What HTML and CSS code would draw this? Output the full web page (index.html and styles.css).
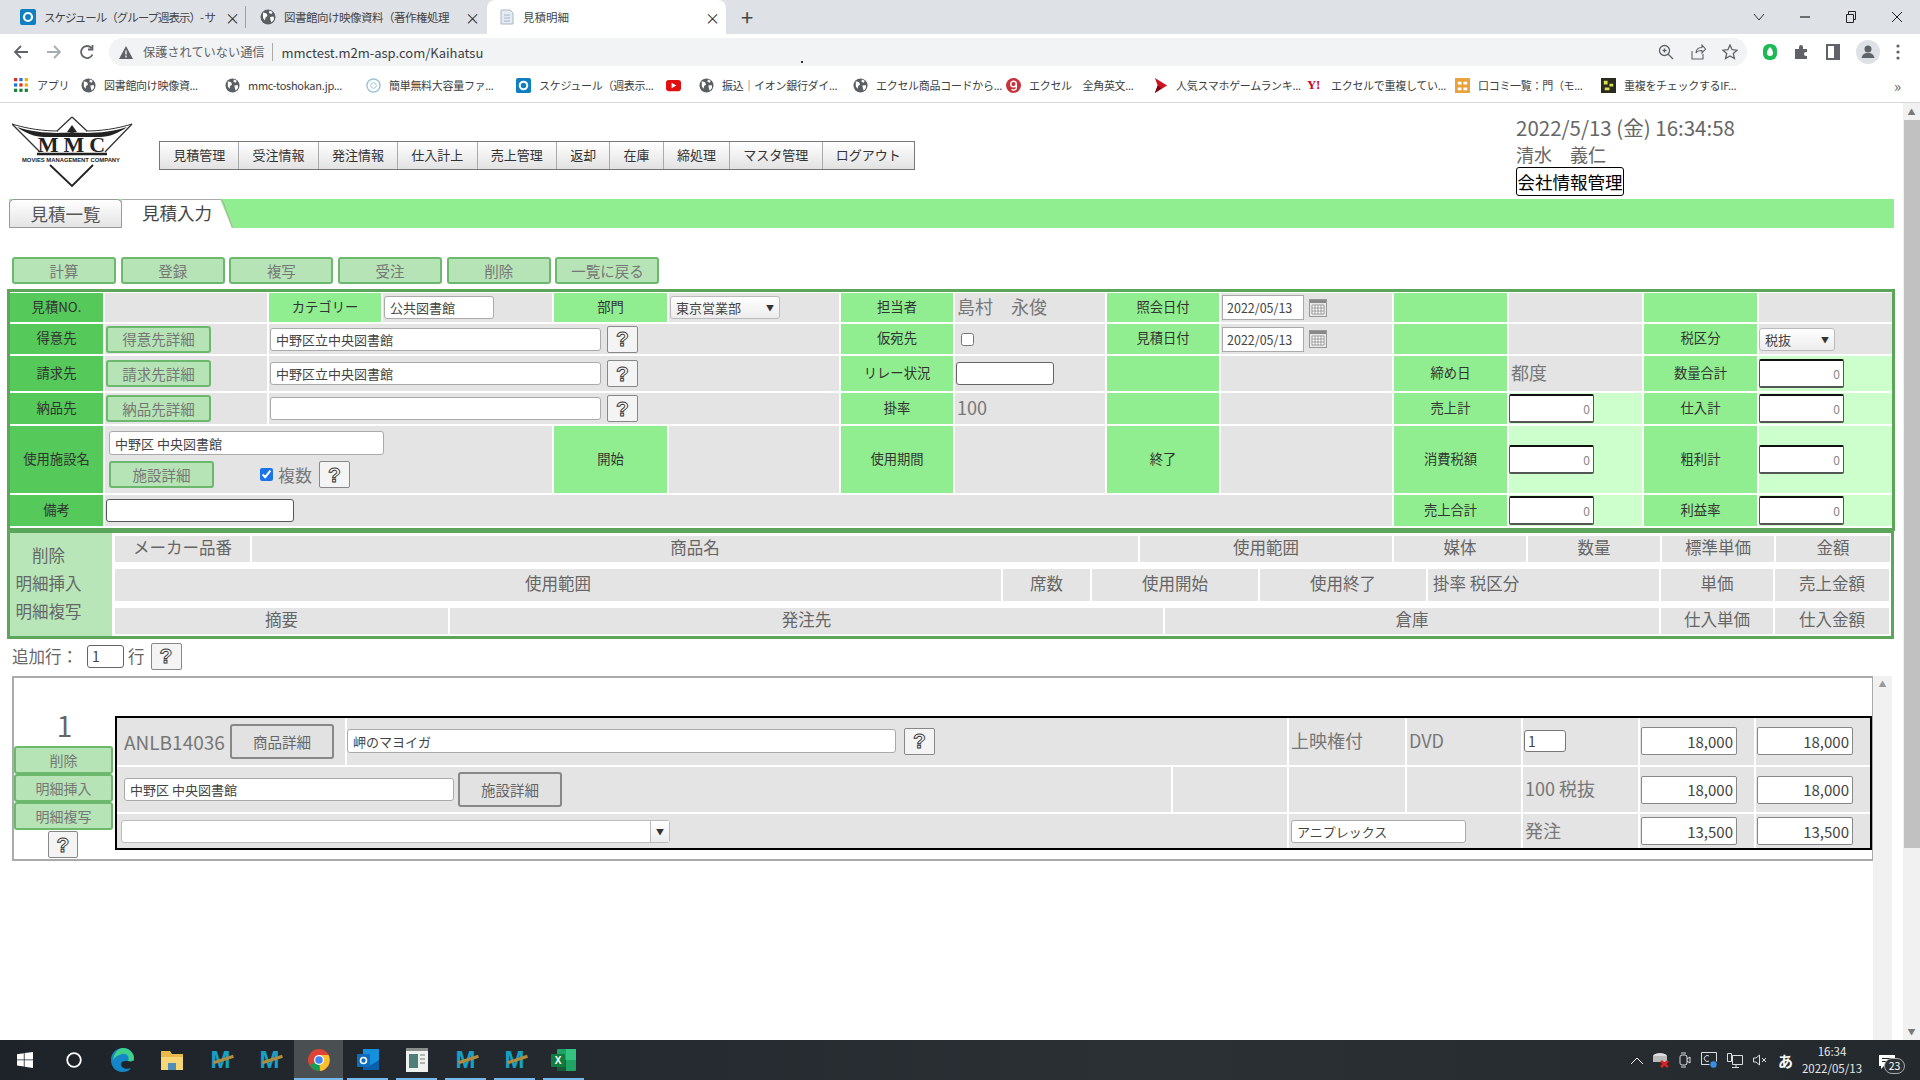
FILE: index.html
```html
<!DOCTYPE html>
<html lang="ja">
<head>
    <meta charset="UTF-8">
    <title>見積明細</title>
    <link rel="stylesheet" href="styles.css">
</head>
<body>
    <svg class="defs" width="0" height="0">
        <symbol id="globe" viewBox="0 0 16 16">
            <circle cx="8" cy="8" r="7.5" fill="#5a5f64"/>
            <path d="M3 3.5l3.5 1 1 2.5-2 1.5-.5 3-2-2.500zM9.500 1.500l3 1.500-1 2-2.500-1zM10 8l3.500-.5.5 3-2.500 3-1-2.500z" fill="#fff"/>
        </symbol>
        <symbol id="ring" viewBox="0 0 16 16">
            <rect width="16" height="16" rx="2" fill="#0f7fc0"/>
            <circle cx="8" cy="8" r="4" fill="none" stroke="#fff" stroke-width="2.200"/>
        </symbol>
        <symbol id="cal" viewBox="0 0 18 18">
            <rect x=".5" y=".5" width="17" height="17" fill="#e8e8e8" stroke="#999"/>
            <rect x="1" y="1" width="16" height="3" fill="#888"/>
            <path d="M3 6h12v9H3zM3 9h12M3 12h12M6 6v9M9 6v9M12 6v9" fill="#fff" stroke="#888" stroke-width=".8"/>
        </symbol>
    </svg>

    <header class="browser">
        <div class="tabstrip">
            <div class="tab tab-a">
                <svg class="ico16"><use href="#ring"/></svg>
                <span class="tab-title">スケジュール（グループ週表示）- サ</span>
                <span class="tab-x">×</span>
            </div>
            <div class="tab tab-b">
                <svg class="ico16"><use href="#globe"/></svg>
                <span class="tab-title">図書館向け映像資料（著作権処理</span>
                <span class="tab-x">×</span>
            </div>
            <div class="tab tab-active">
                <svg class="ico16" viewBox="0 0 16 16"><path d="M2 1h9l3 3v11H2z" fill="#e6ebf2" stroke="#a9b6c6"/><path d="M5 6h6M5 9h6M5 12h6" stroke="#9fb4cf"/></svg>
                <span class="tab-title">見積明細</span>
                <span class="tab-x">×</span>
            </div>
            <span class="tab-new">+</span>
            <div class="winctl">
                <svg width="12" height="12" viewBox="0 0 12 12"><path d="M1 3l5 6 5-6" fill="none" stroke="#333"/></svg>
                <svg width="12" height="12" viewBox="0 0 12 12"><path d="M1 6h10" stroke="#222" stroke-width="1.200"/></svg>
                <svg width="12" height="12" viewBox="0 0 12 12"><path d="M1.500 3.500h7v8h-7zM3.500 3.500v-3h7v8h-2" fill="none" stroke="#222"/></svg>
                <svg width="12" height="12" viewBox="0 0 12 12"><path d="M1 1l10 10M11 1L1 11" stroke="#222"/></svg>
            </div>
        </div>

        <div class="toolbar">
            <div class="nav-btns">
                <svg width="16" height="16" viewBox="0 0 16 16"><path d="M15 8H2M8 2L2 8l6 6" fill="none" stroke="#5f6368" stroke-width="1.800"/></svg>
                <svg width="16" height="16" viewBox="0 0 16 16"><path d="M1 8h13M8 2l6 6-6 6" fill="none" stroke="#a9adb1" stroke-width="1.800"/></svg>
                <svg width="16" height="16" viewBox="0 0 16 16"><path d="M13.500 10.500A6 6 0 1 1 12.500 4M13.500 1v4.500H9" fill="none" stroke="#5f6368" stroke-width="1.800"/></svg>
            </div>
            <div class="omnibox">
                <svg width="14" height="13" viewBox="0 0 14 13"><path d="M7 0l7 13H0z" fill="#5f6368"/><path d="M7 4.500v4M7 9.500v2" stroke="#fff" stroke-width="1.300"/></svg>
                <span class="omni-warn">保護されていない通信</span>
                <span class="omni-url">mmctest.m2m-asp.com/Kaihatsu</span>
                <i class="omni-dot"></i>
                <div class="omni-tools">
                    <svg width="16" height="16" viewBox="0 0 16 16"><circle cx="6.500" cy="6.500" r="5" fill="none" stroke="#5f6368" stroke-width="1.300"/><path d="M10 10l5 5M4.500 6.500h4M6.500 4.500v4" stroke="#5f6368" stroke-width="1.300"/></svg>
                    <svg width="16" height="16" viewBox="0 0 16 16"><path d="M2 7v8h11v-5M6 9c0-4 3-5.500 6-5.500V1l3.500 4-3.500 4V6.500C9 6.500 7 7 6 9z" fill="none" stroke="#5f6368" stroke-width="1.100"/></svg>
                    <svg width="16" height="16" viewBox="0 0 16 16"><path d="M8 1l2.100 4.700 5 .5-3.800 3.300 1.100 5L8 12l-4.400 2.500 1.100-5L.9 6.200l5-.5z" fill="none" stroke="#5f6368" stroke-width="1.300"/></svg>
                </div>
            </div>
            <div class="ext-btns">
                <svg width="16" height="18" viewBox="0 0 16 18"><rect x="1" y="1" width="14" height="16" rx="6" fill="#1db954"/><path d="M8 4c2 2 3 4 3 6a3 3 0 0 1-6 0c0-2 1-4 3-6z" fill="#fff"/></svg>
                <svg width="16" height="16" viewBox="0 0 16 16"><path d="M1 5h4V3a2 2 0 0 1 4 0v2h4v3h-1a2 2 0 0 0 0 4h1v3H1z" fill="#5f6368"/></svg>
                <svg width="14" height="16" viewBox="0 0 14 16"><rect x="1" y="1" width="12" height="14" fill="none" stroke="#5f6368" stroke-width="2"/><rect x="8" y="1" width="5" height="14" fill="#5f6368"/></svg>
                <svg width="24" height="24" viewBox="0 0 24 24"><circle cx="12" cy="12" r="12" fill="#dee1e6"/><circle cx="12" cy="9" r="3.500" fill="#5f6368"/><path d="M5.500 18c1-4 3-5 6.500-5s5.500 1 6.500 5z" fill="#5f6368"/></svg>
                <svg width="4" height="16" viewBox="0 0 4 16"><circle cx="2" cy="2" r="1.600" fill="#5f6368"/><circle cx="2" cy="8" r="1.600" fill="#5f6368"/><circle cx="2" cy="14" r="1.600" fill="#5f6368"/></svg>
            </div>
        </div>

        <div class="bookmarks">
            <div class="bm">
                <svg class="ico14" viewBox="0 0 14 14"><g fill="#d93025"><rect width="3" height="3"/><rect x="5" y="5" width="3" height="3"/></g><g fill="#1a73e8"><rect x="5" width="3" height="3"/><rect y="5" width="3" height="3"/></g><g fill="#f9ab00"><rect x="10" width="3" height="3"/><rect x="10" y="5" width="3" height="3"/></g><g fill="#188038"><rect y="10" width="3" height="3"/><rect x="5" y="10" width="3" height="3"/><rect x="10" y="10" width="3" height="3"/></g></svg>
                <span>アプリ</span>
            </div>
            <div class="bm"><svg class="ico14"><use href="#globe"/></svg><span>図書館向け映像資...</span></div>
            <div class="bm"><svg class="ico14"><use href="#globe"/></svg><span>mmc-toshokan.jp...</span></div>
            <div class="bm"><svg class="ico14" viewBox="0 0 16 16"><circle cx="8" cy="8" r="7" fill="none" stroke="#9cc3d5" stroke-width="1.500"/><circle cx="8" cy="8" r="3" fill="none" stroke="#9cc3d5"/></svg><span>簡単無料大容量ファ...</span></div>
            <div class="bm"><svg class="ico14"><use href="#ring"/></svg><span>スケジュール（週表示...</span></div>
            <div class="bm"><svg class="ico14" viewBox="0 0 16 16"><rect y="2" width="16" height="12" rx="3" fill="#e01010"/><path d="M6 5l5 3-5 3z" fill="#fff"/></svg></div>
            <div class="bm"><svg class="ico14"><use href="#globe"/></svg><span>振込｜イオン銀行ダイ...</span></div>
            <div class="bm"><svg class="ico14"><use href="#globe"/></svg><span>エクセル商品コードから...</span></div>
            <div class="bm"><svg class="ico14" viewBox="0 0 16 16"><circle cx="8" cy="8" r="8" fill="#c8323c"/><circle cx="8" cy="6.500" r="3" fill="none" stroke="#fff" stroke-width="1.500"/><path d="M11 7v4c0 2-4 2.500-5 1" fill="none" stroke="#fff" stroke-width="1.500"/></svg><span>エクセル　全角英文...</span></div>
            <div class="bm"><svg class="ico14" viewBox="0 0 16 16"><path d="M2 0l13 8-13 8 3-8z" fill="#d0101c"/><path d="M5 8l-3 8 7-5z" fill="#70080e"/></svg><span>人気スマホゲームランキ...</span></div>
            <div class="bm"><span class="bm-y">Y!</span><span>エクセルで重複してい...</span></div>
            <div class="bm"><svg class="ico14" viewBox="0 0 16 16"><rect width="16" height="16" fill="#e8a33c"/><path d="M3 4h4v3H3zM9 4h4v3H9zM3 10h4v3H3zM9 10h4v3H9z" fill="#fff"/></svg><span>口コミ一覧：門（モ...</span></div>
            <div class="bm"><svg class="ico14" viewBox="0 0 16 16"><rect width="16" height="16" fill="#2a2a1e"/><path d="M3 3h4v4H3zM9 6h4v3H9zM4 10h5v3H4z" fill="#d8e04c"/></svg><span>重複をチェックするIF...</span></div>
            <span class="bm-more">»</span>
        </div>
    </header>

    <div class="page">
        <main class="content">
            <div class="page-head">
                <svg class="logo" viewBox="0 0 124 74" width="124" height="74">
                    <path d="M60 2L45 16M60 2l15 14" fill="none" stroke="#333" stroke-width="1.300"/>
                    <path d="M60 10l-5 7h10z" fill="#222"/>
                    <path d="M0 9c16 5 32 7 46 7M120 9c-16 5-32 7-46 7" fill="none" stroke="#333" stroke-width="1"/>
                    <path d="M5 12c18 6 40 7 55 5 15 2 37 1 55-5-8 6-18 10-27 10H32C23 22 13 18 5 12z" fill="#222"/>
                    <path d="M0 9l28 28M120 9L93 37" fill="none" stroke="#333" stroke-width="1.300"/>
                    <path d="M38 50l22 21 21-21" fill="none" stroke="#222" stroke-width="1.800"/>
                    <text class="logo-mmc" x="62" y="37" text-anchor="middle">MMC</text>
                    <path d="M25 39h70" stroke="#222" stroke-width="2.500"/>
                    <text class="logo-sub" x="59" y="46.500" text-anchor="middle" textLength="98" lengthAdjust="spacingAndGlyphs">MOVIES MANAGEMENT COMPANY</text>
                </svg>
                <nav class="menu">
                    <a>見積管理</a><a>受注情報</a><a>発注情報</a><a>仕入計上</a><a>売上管理</a><a>返却</a><a>在庫</a><a>締処理</a><a>マスタ管理</a><a>ログアウト</a>
                </nav>
                <div class="head-info">
                    <div class="clock">2022/5/13 (金) 16:34:58</div>
                    <div class="user">清水　義仁</div>
                    <button class="company-btn">会社情報管理</button>
                </div>
            </div>

            <div class="tabbar">
                <div class="ptab">見積一覧</div>
                <div class="ptab-on">
                    <span>見積入力</span>
                    <svg width="18" height="29" viewBox="0 0 18 29"><path d="M0 0h4l12 29H0z" fill="#fff"/><path d="M0 .5h4c1.500 0 2.500 1 3 2L16.500 29" fill="none" stroke="#aaa"/></svg>
                </div>
            </div>

            <div class="actions">
                <button class="gbtn">計算</button>
                <button class="gbtn">登録</button>
                <button class="gbtn">複写</button>
                <button class="gbtn">受注</button>
                <button class="gbtn">削除</button>
                <button class="gbtn">一覧に戻る</button>
            </div>

            <table class="form">
                <colgroup>
                    <col class="c93"><col class="c164"><col class="c114"><col class="c171"><col class="c115"><col class="c172"><col class="c114"><col class="c152"><col class="c114"><col class="c173"><col class="c115"><col class="c135"><col class="c115"><col class="c135">
                </colgroup>
                <tr class="r1">
                    <th class="dk">見積NO.</th><td></td>
                    <th>カテゴリー</th><td><input class="in in-cat" value="公共図書館"></td>
                    <th>部門</th><td><div class="sel sel-dept">東京営業部<i>▼</i></div></td>
                    <th>担当者</th><td class="val">島村　永俊</td>
                    <th>照会日付</th><td><div class="datewrap"><input class="in in-date" value="2022/05/13"><svg width="18" height="18"><use href="#cal"/></svg></div></td>
                    <th></th><td></td><th></th><td></td>
                </tr>
                <tr class="r2">
                    <th class="dk">得意先</th><td><button class="gbtn gbtn-s">得意先詳細</button></td>
                    <td colspan="4"><div class="inrow"><input class="in in-long" value="中野区立中央図書館"><button class="help">?</button></div></td>
                    <th>仮宛先</th><td><input class="chk" type="checkbox"></td>
                    <th>見積日付</th><td><div class="datewrap"><input class="in in-date" value="2022/05/13"><svg width="18" height="18"><use href="#cal"/></svg></div></td>
                    <th></th><td></td>
                    <th>税区分</th><td><div class="sel sel-tax">税抜<i>▼</i></div></td>
                </tr>
                <tr class="r3">
                    <th class="dk">請求先</th><td><button class="gbtn gbtn-s">請求先詳細</button></td>
                    <td colspan="4"><div class="inrow"><input class="in in-long" value="中野区立中央図書館"><button class="help">?</button></div></td>
                    <th>リレー状況</th><td><input class="in in-relay"></td>
                    <th></th><td></td>
                    <th>締め日</th><td class="val">都度</td>
                    <th>数量合計</th><td class="lt"><input class="tot" value="0"></td>
                </tr>
                <tr class="r4">
                    <th class="dk">納品先</th><td><button class="gbtn gbtn-s">納品先詳細</button></td>
                    <td colspan="4"><div class="inrow"><input class="in in-long"><button class="help">?</button></div></td>
                    <th>掛率</th><td class="val">100</td>
                    <th></th><td></td>
                    <th>売上計</th><td class="lt"><input class="tot" value="0"></td>
                    <th>仕入計</th><td class="lt"><input class="tot" value="0"></td>
                </tr>
                <tr class="r5">
                    <th class="dk">使用施設名</th>
                    <td colspan="3">
                        <input class="in in-facility" value="中野区 中央図書館">
                        <div class="facility-row">
                            <button class="gbtn gbtn-s">施設詳細</button>
                            <input class="chk chk-on" type="checkbox" checked>
                            <span class="chk-label">複数</span>
                            <button class="help">?</button>
                        </div>
                    </td>
                    <th>開始</th><td></td>
                    <th>使用期間</th><td></td>
                    <th>終了</th><td></td>
                    <th>消費税額</th><td class="lt"><input class="tot" value="0"></td>
                    <th>粗利計</th><td class="lt"><input class="tot" value="0"></td>
                </tr>
                <tr class="r6">
                    <th class="dk">備考</th>
                    <td colspan="9"><input class="in in-note"></td>
                    <th>売上合計</th><td class="lt"><input class="tot" value="0"></td>
                    <th>利益率</th><td class="lt"><input class="tot" value="0"></td>
                </tr>
            </table>

            <div class="dhead">
                <div class="dhead-ops">
                    <div>削除</div>
                    <div>明細挿入</div>
                    <div>明細複写</div>
                </div>
                <div class="dhead-rows">
                    <div class="drow drow-a">
                        <div>メーカー品番</div><div>商品名</div><div>使用範囲</div><div>媒体</div><div>数量</div><div>標準単価</div><div>金額</div>
                    </div>
                    <div class="drow drow-b">
                        <div>使用範囲</div><div>席数</div><div>使用開始</div><div>使用終了</div><div class="drow-left">掛率 税区分</div><div>単価</div><div>売上金額</div>
                    </div>
                    <div class="drow drow-c">
                        <div>摘要</div><div>発注先</div><div>倉庫</div><div>仕入単価</div><div>仕入金額</div>
                    </div>
                </div>
            </div>

            <div class="addrow">
                <span>追加行：</span>
                <input class="in in-add" value="1">
                <span>行</span>
                <button class="help">?</button>
            </div>

            <div class="scrollarea">
                <div class="panel">
                    <div class="panel-side">
                        <div class="line-no">1</div>
                        <button class="gbtn gbtn-line">削除</button>
                        <button class="gbtn gbtn-line">明細挿入</button>
                        <button class="gbtn gbtn-line">明細複写</button>
                        <button class="help">?</button>
                    </div>
                    <table class="lines">
                        <colgroup>
                            <col class="l228"><col class="l826"><col class="l116"><col class="l118"><col class="l116"><col class="l117"><col class="l116"><col class="l116">
                        </colgroup>
                        <tr class="l1">
                            <td><div class="inrow"><span class="val code">ANLB14036</span><button class="gray-btn">商品詳細</button></div></td>
                            <td colspan="2" class="name-cell"><div class="inrow"><input class="in in-name" value="岬のマヨイガ"><button class="help">?</button></div></td>
                            <td class="val">上映権付</td>
                            <td class="val">DVD</td>
                            <td><input class="in in-qty" value="1"></td>
                            <td><input class="amt" value="18,000"></td>
                            <td><input class="amt" value="18,000"></td>
                        </tr>
                        <tr class="l2">
                            <td colspan="2"><div class="inrow"><input class="in in-site" value="中野区 中央図書館"><button class="gray-btn">施設詳細</button></div></td>
                            <td></td><td></td><td></td>
                            <td class="val">100 税抜</td>
                            <td><input class="amt" value="18,000"></td>
                            <td><input class="amt" value="18,000"></td>
                        </tr>
                        <tr class="l3">
                            <td colspan="3"><div class="combo"><span></span><i>▼</i></div></td>
                            <td colspan="2"><input class="in in-vendor" value="アニプレックス"></td>
                            <td class="val">発注</td>
                            <td><input class="amt" value="13,500"></td>
                            <td><input class="amt" value="13,500"></td>
                        </tr>
                    </table>
                </div>
                <div class="mini-scroll"><i>▲</i></div>
            </div>
        </main>
        <aside class="vscroll">
            <i class="vs-up">▲</i>
            <div class="vs-thumb"></div>
            <i class="vs-down">▼</i>
        </aside>
    </div>

    <footer class="taskbar">
        <div class="tb-app">
            <svg width="16" height="16" viewBox="0 0 16 16"><path d="M0 2.300l6.800-1v6.200H0zM7.600 1.100L16 0v7.500H7.600zM0 8.300h6.800v6.300l-6.800-1zM7.600 8.300H16V16l-8.400-1.200z" fill="#fff"/></svg>
        </div>
        <div class="tb-app">
            <svg width="16" height="16" viewBox="0 0 16 16"><circle cx="8" cy="8" r="6.800" fill="none" stroke="#fff" stroke-width="1.800"/></svg>
        </div>
        <div class="tb-app">
            <svg width="24" height="24" viewBox="0 0 24 24"><path d="M12 0C5 0 0 5 0 12c0 7 5 12 11 12 4 0 7-1 9-4-5 2-10 0-10-4 0-2 2-3 5-3h8c1-6-3-13-11-13z" fill="#1487c8"/><path d="M12 0c6 0 11 5 11 10 0 3-3 4-6 3 2-4-1-8-6-7-4 1-7 3-9 6C3 5 7 0 12 0z" fill="#3fd08a"/></svg>
        </div>
        <div class="tb-app">
            <svg width="22" height="20" viewBox="0 0 22 20"><path d="M0 1h9l2 3h11v16H0z" fill="#e9b949"/><path d="M0 7h22v13H0z" fill="#f6d675"/><rect x="7" y="13" width="8" height="7" fill="#4f8fb8"/></svg>
        </div>
        <div class="tb-app"><span class="tb-m">M</span></div>
        <div class="tb-app"><span class="tb-m">M</span></div>
        <div class="tb-app tb-active tb-run">
            <svg width="22" height="22" viewBox="0 0 22 22"><circle cx="11" cy="11" r="11" fill="#db4437"/><path d="M11 11L2 16a11 11 0 0 0 10 6z" fill="#0f9d58"/><path d="M11 6h9.500a11 11 0 0 1-8.500 16z" fill="#fbc02d"/><circle cx="11" cy="11" r="5" fill="#fff"/><circle cx="11" cy="11" r="3.800" fill="#4285f4"/></svg>
        </div>
        <div class="tb-app tb-run">
            <svg width="24" height="24" viewBox="0 0 24 24"><rect x="7" y="1" width="16" height="21" fill="#1490df"/><path d="M7 12l8 5 8-5v10H7z" fill="#0a5fa8"/><rect x="1" y="6" width="13" height="13" rx="1" fill="#0f6cbd"/><circle cx="7.500" cy="12.500" r="3" fill="none" stroke="#fff" stroke-width="1.600"/></svg>
        </div>
        <div class="tb-app tb-run">
            <svg width="22" height="24" viewBox="0 0 22 24"><rect width="22" height="24" fill="#eef1ee"/><rect y="0" width="22" height="3" fill="#8a8f8c"/><rect x="3" y="6" width="9" height="14" fill="#4f7f78"/><path d="M14 7h5M14 11h5M14 15h5" stroke="#777"/></svg>
        </div>
        <div class="tb-app tb-run"><span class="tb-m">M</span></div>
        <div class="tb-app tb-run"><span class="tb-m">M</span></div>
        <div class="tb-app tb-run">
            <svg width="25" height="24" viewBox="0 0 25 24"><rect x="6" y="1" width="19" height="22" rx="1" fill="#21a366"/><rect x="15" y="1" width="10" height="11" fill="#33c481"/><rect x="6" y="12" width="9" height="11" fill="#185c37"/><rect y="6" width="14" height="13" rx="1" fill="#107c41"/><text class="tb-x" x="7" y="16" text-anchor="middle">X</text></svg>
        </div>
        <div class="tray">
            <svg width="12" height="7" viewBox="0 0 12 7"><path d="M0 7l6-6 6 6" fill="none" stroke="#fff"/></svg>
            <svg width="16" height="16" viewBox="0 0 16 16"><ellipse cx="7" cy="4" rx="7" ry="3" fill="#ddd"/><rect y="4" width="14" height="6" fill="#bbb"/><path d="M8 9l7 6M15 9l-7 6" stroke="#e02020" stroke-width="2.500"/></svg>
            <svg width="12" height="16" viewBox="0 0 12 16"><rect x="1" y="3" width="7" height="10" rx="2" fill="none" stroke="#ddd"/><path d="M8 7l3-2v6l-3-2M2 1h5M2 15h5" fill="none" stroke="#ddd"/></svg>
            <svg width="16" height="16" viewBox="0 0 16 16"><path d="M.5.500h15v9M.5.500v12h8" fill="none" stroke="#ddd"/><path d="M8 4a3 3 0 1 0 0 5" fill="none" stroke="#ddd"/><circle cx="12.500" cy="12.500" r="3.200" fill="#3a8ee6"/></svg>
            <svg width="16" height="15" viewBox="0 0 16 15"><path d="M5.500 2.500h10v9h-10zM.5.500h4v8h-4zM5 14.500h7M9 11.500v3" fill="none" stroke="#ddd"/></svg>
            <svg width="14" height="12" viewBox="0 0 14 12"><path d="M.5 4v4h2.500L6.500 11V1L3 4zM9 4l4 4M13 4l-4 4" fill="none" stroke="#ddd"/></svg>
            <span class="tray-ime">あ</span>
            <div class="tray-clock"><div>16:34</div><div>2022/05/13</div></div>
            <div class="tray-note">
                <svg width="16" height="14" viewBox="0 0 16 14"><path d="M0 0h16v11H5l-3 3v-3H0z" fill="#fff"/><path d="M3 3.500h10M3 6.500h10" stroke="#222"/></svg>
                <span class="tray-badge">23</span>
            </div>
        </div>
    </footer>
</body>
</html>
```

FILE: styles.css
```css
* {
    box-sizing: border-box;
}
html, body {
    margin: 0;
    height: 1080px;
    overflow: hidden;
}
body {
    display: flex;
    flex-direction: column;
    width: 1920px;
    background: #fff;
    font-family: "Noto Sans CJK JP", "Noto Sans", sans-serif;
    color: #666;
}
button, input {
    font-family: inherit;
    margin: 0;
}
.defs {
    display: block;
    height: 0;
}
.ico16 {
    width: 16px;
    height: 16px;
    flex: none;
}
.ico14 {
    width: 15px;
    height: 15px;
    flex: none;
}

/* browser frame */
.browser {
    height: 103px;
    flex: none;
    border-bottom: 1px solid #d8d8d8;
}
.tabstrip {
    display: flex;
    height: 34px;
    background: #dee1e6;
    font-size: 11.500px;
    color: #444;
}
.tab {
    display: flex;
    align-items: center;
    gap: 8px;
}
.tab-a {
    width: 246px;
    padding: 0 10px 0 20px;
    border-right: 1px solid #9aa0a6;
    height: 22px;
    margin-top: 6px;
    letter-spacing: -1px;
}
.tab-b {
    width: 241px;
    padding: 0 12px 0 14px;
    height: 22px;
    margin-top: 6px;
    letter-spacing: -.5px;
}
.tab-active {
    width: 239px;
    padding: 0 11px 0 12px;
    background: #fff;
    border-radius: 8px 8px 0 0;
}
.tab-title {
    flex: 1;
    min-width: 0;
    white-space: nowrap;
}
.tab-x {
    width: 10px;
    flex: none;
    font-size: 15px;
    line-height: 1;
    text-align: center;
    color: #333;
}
.tab-new {
    margin-left: 15px;
    font-size: 22px;
    line-height: 32px;
    color: #444;
}
.winctl {
    margin-left: auto;
    display: flex;
    align-items: center;
    gap: 34px;
    padding-right: 17px;
}
.toolbar {
    display: flex;
    align-items: center;
    height: 32px;
    padding-top: 4px;
}
.nav-btns {
    display: flex;
    gap: 17px;
    padding-left: 13px;
    width: 109px;
}
.omnibox {
    position: relative;
    display: flex;
    align-items: center;
    width: 1638px;
    height: 28px;
    padding-left: 10px;
    background: #f1f3f4;
    border-radius: 14px;
    font-size: 13px;
}
.omni-warn {
    margin-left: 10px;
    padding-right: 7px;
    border-right: 1px solid #aaa;
    font-size: 12.200px;
    color: #5f6368;
    line-height: 18px;
}
.omni-url {
    margin-left: 9px;
    color: #3c4043;
}
.omni-dot {
    position: absolute;
    left: 692px;
    top: 23px;
    width: 2px;
    height: 2px;
    background: #333;
}
.omni-tools {
    margin-left: auto;
    display: flex;
    gap: 16px;
    padding-right: 9px;
}
.ext-btns {
    display: flex;
    align-items: center;
    gap: 16px;
    padding-left: 15px;
}
.bookmarks {
    display: grid;
    grid-template-columns: 67px 144px 141px 150px 150px 33px 154px 153px 147px 154px 148px 146px 1fr 20px;
    align-items: center;
    height: 36px;
    padding: 2px 6px 0 14px;
    font-size: 11px;
    letter-spacing: -.3px;
    color: #3c4043;
}
.bm {
    display: flex;
    align-items: center;
    gap: 8px;
    white-space: nowrap;
}
.bm-y {
    width: 16px;
    font: bold 13px "Liberation Serif", serif;
    color: #d0021b;
}
.bm-more {
    font-size: 15px;
    color: #5f6368;
}

/* page */
.page {
    flex: 1;
    display: flex;
    min-height: 0;
}
.content {
    width: 1903px;
    padding-left: 7px;
}
.vscroll {
    position: relative;
    width: 17px;
    background: #f1f1f1;
}
.vscroll i {
    position: absolute;
    left: 0;
    width: 17px;
    text-align: center;
    font-size: 8px;
    font-style: normal;
    color: #777;
}
.vs-up {
    top: 3px;
}
.vs-down {
    bottom: 3px;
}
.vs-thumb {
    position: absolute;
    top: 17px;
    left: 1px;
    width: 16px;
    height: 728px;
    background: #c1c1c1;
}
.page-head {
    display: flex;
    height: 96px;
}
.logo {
    margin: 12px 0 0 5px;
    flex: none;
}
.logo-mmc {
    font: bold 22px "Liberation Serif", serif;
    letter-spacing: 5px;
    fill: #222;
}
.logo-sub {
    font: bold 5.500px "Liberation Sans", sans-serif;
    fill: #222;
}
.menu {
    display: flex;
    align-self: flex-start;
    margin: 38px 0 0 23px;
    height: 29px;
    border: 1px solid #777;
    background: linear-gradient(#fff, #e2e2e2);
    font-size: 13px;
    color: #333;
    line-height: 26px;
}
.menu a {
    padding: 0 13.200px;
    white-space: nowrap;
}
.menu a + a {
    border-left: 1px solid #aaa;
}
.head-info {
    margin-left: auto;
    width: 387px;
    padding-top: 10px;
}
.clock {
    font-size: 20.500px;
    line-height: 28px;
}
.user {
    font-size: 18px;
    line-height: 27px;
}
.company-btn {
    display: block;
    width: 108px;
    height: 29px;
    padding: 0;
    margin-top: -1px;
    background: #fff;
    border: 1px solid #000;
    border-radius: 3px;
    color: #000;
    font-size: 17.500px;
    line-height: 26px;
}
.tabbar {
    display: flex;
    margin-left: 2px;
    width: 1885px;
    height: 29px;
    background: #90ee90;
}
.ptab {
    width: 113px;
    border: 1px solid #999;
    border-top-left-radius: 5px;
    border-top-right-radius: 5px;
    background: linear-gradient(#fff, #e4e4e4);
    font-size: 17.500px;
    line-height: 27px;
    text-align: center;
    color: #555;
}
.ptab-on {
    display: flex;
    font-size: 17.500px;
    line-height: 26px;
    color: #444;
}
.ptab-on span {
    width: 94px;
    padding-left: 20px;
    background: #fff;
    border-top: 1px solid #aaa;
    white-space: nowrap;
}
.actions {
    display: flex;
    gap: 4.700px;
    margin: 29px 0 0 5px;
}
.gbtn {
    width: 104px;
    height: 27px;
    padding: 0;
    background: #b6e4b6;
    border: 2px solid #6cb86c;
    border-radius: 3px;
    color: #777;
    font-size: 14.500px;
    line-height: 22px;
}
.gbtn-s {
    width: 105px;
    display: block;
    margin-left: 1px;
}
.gbtn-line {
    display: block;
    width: 99px;
    height: 28px;
    margin-bottom: 0;
    font-size: 14px;
}

/* estimate form */
.form {
    width: 1888px;
    margin-top: 5px;
    table-layout: fixed;
    border-collapse: separate;
    border-spacing: 0;
    border: 3px solid #5ca65c;
    padding-bottom: 2px;
    font-size: 13.300px;
}
.c93 { width: 93px; }
.c114 { width: 114px; }
.c115 { width: 115px; }
.c135 { width: 135px; }
.c152 { width: 152px; }
.c164 { width: 164px; }
.c171 { width: 171px; }
.c172 { width: 172px; }
.c173 { width: 173px; }
.form th, .form td {
    padding: 0;
    background: #e4e4e4;
    border-top: 2px solid #fff;
    overflow: hidden;
}
.form th + *, .form td + * {
    border-left: 2px solid #fff;
}
.form th {
    background: #90ee90;
    padding-bottom: 3px;
    font-weight: 400;
    color: #333;
    text-align: center;
    white-space: nowrap;
}
.form th.dk {
    background: #55c95a;
}
.form td.lt {
    background: #ccffcc;
}
.form .val {
    padding: 0 0 3px 2px;
    font-size: 18px;
    color: #777;
}
.r1 > * { height: 30px; border-top-width: 1px !important; }
.r2 > * { height: 32px; }
.r3 > * { height: 37px; }
.r4 > * { height: 33px; }
.r5 > * { height: 69px; }
.r6 > * { height: 33px; }
.in {
    height: 23px;
    padding: 0 5px;
    border: 1px solid #aaa;
    border-radius: 3px;
    background: #fff;
    color: #444;
    font-size: 13px;
    vertical-align: middle;
}
.in-cat {
    width: 110px;
    margin-left: 1px;
}
.in-date {
    width: 82px;
    height: 25px;
    padding: 0 4px;
    font-size: 12.500px;
    border-radius: 0;
}
.in-long {
    width: 331px;
}
.in-relay {
    width: 98px;
    margin-left: 1px;
    border-color: #666;
}
.in-facility {
    display: block;
    width: 275px;
    height: 24px;
    margin-left: 4px;
}
.in-note {
    display: block;
    width: 188px;
    border-color: #555;
    margin-left: 1px;
}
.in-add {
    width: 37px;
    height: 23px;
    padding: 0 4px;
    border-color: #666;
    font-size: 14px;
}
.inrow {
    display: flex;
    align-items: center;
    gap: 6px;
}
.form td > .inrow {
    padding-left: 1px;
}
.datewrap {
    display: flex;
    align-items: center;
    gap: 5px;
    padding-left: 1px;
}
.help {
    width: 31px;
    height: 27px;
    padding: 0;
    flex: none;
    background: #f4f4f4;
    border: 1px solid #888;
    border-radius: 2px;
    font: bold 21px/24px "Liberation Sans", sans-serif;
    color: #f4f4f4;
    -webkit-text-stroke: .9px #333;
}
.sel {
    display: flex;
    align-items: center;
    justify-content: space-between;
    height: 23px;
    padding: 0 5px;
    background: linear-gradient(#fff, #ececec);
    border: 1px solid #bbb;
    border-radius: 3px;
    font-size: 13px;
    color: #444;
}
.sel i {
    font-size: 8px;
    font-style: normal;
    color: #333;
}
.sel-dept {
    width: 110px;
    margin-left: 1px;
}
.sel-tax {
    width: 76px;
}
.chk {
    display: block;
    width: 13px;
    height: 13px;
    margin: 0 0 0 6px;
    accent-color: #1a73e8;
}
.tot {
    display: block;
    width: 85px;
    height: 29px;
    padding: 0 3px;
    background: #fff;
    border: 1px solid #555;
    border-top: 2px solid #111;
    border-bottom: 2px solid #555;
    border-radius: 2px;
    text-align: right;
    font-size: 12px;
    color: #888;
}
.facility-row {
    display: flex;
    align-items: center;
    margin-top: 6px;
    padding-left: 4px;
}
.facility-row .gbtn {
    margin-left: 0;
    flex: none;
}
.facility-row .chk {
    margin-left: 46px;
}
.chk-label {
    margin: 0 7px 0 5px;
    font-size: 17px;
    color: #777;
    line-height: 26px;
}

/* line header */
.dhead {
    display: flex;
    width: 1887px;
    height: 108px;
    border: 3px solid #5ca65c;
    border-top-width: 2px;
}
.dhead-ops {
    width: 102px;
    padding: 8px 25px 0 0;
    background: #b8e6b8;
    font-size: 16.500px;
    line-height: 28px;
    text-align: center;
    color: #666;
}
.dhead-rows {
    display: flex;
    flex-direction: column;
    gap: 7px;
    padding: 3px 0 0 3px;
}
.drow {
    display: grid;
    column-gap: 2px;
    font-size: 16.500px;
    text-align: center;
    color: #666;
}
.drow > div {
    background: #e4e4e4;
}
.drow-left {
    padding-left: 5px;
    text-align: left;
}
.drow-a {
    grid-template-columns: 135px 886px 252px 132px 132px 112px 114px;
    height: 26px;
    line-height: 23px;
}
.drow-b {
    grid-template-columns: 886px 87px 166px 166px 231px 112px 114px;
    height: 32px;
    line-height: 29px;
}
.drow-c {
    grid-template-columns: 333px 713px 494px 112px 114px;
    height: 26px;
    line-height: 23px;
}
.addrow {
    display: flex;
    align-items: center;
    gap: 4px;
    height: 37px;
    padding: 0 0 3px 5px;
    font-size: 16.500px;
}
.addrow .in-add {
    margin-left: 5px;
}
.addrow .help {
    margin-left: 2px;
}

/* line items */
.scrollarea {
    display: flex;
    margin-left: 5px;
    width: 1880px;
}
.panel {
    display: flex;
    width: 1861px;
    height: 185px;
    padding-top: 38px;
    border: 2px solid #aaa;
    border-right-width: 1px;
}
.panel-side {
    width: 101px;
    flex: none;
    margin-top: -10px;
    text-align: center;
}
.line-no {
    height: 40px;
    font-size: 28px;
    line-height: 38px;
    color: #666;
}
.panel-side .help {
    display: block;
    height: 27px;
    width: 30px;
    margin: 1px auto 0 34px;
}
.lines {
    width: 1757px;
    height: 134px;
    flex: none;
    table-layout: fixed;
    border-collapse: separate;
    border-spacing: 0;
    border: 2px solid #000;
    font-size: 18px;
}
.l116 { width: 116px; }
.l117 { width: 117px; }
.l118 { width: 118px; }
.l228 { width: 228px; }
.l826 { width: 826px; }
.lines td {
    padding: 0 0 0 1px;
    background: #e4e4e4;
    overflow: hidden;
}
.lines td + td {
    border-left: 2px solid #fff;
}
.lines tr + tr td {
    border-top: 2px solid #fff;
}
.lines td.val {
    padding: 0 0 3px 2px;
    font-size: 18px;
    color: #777;
    white-space: nowrap;
}
.l1 td { height: 46px; }
.l2 td { height: 47px; }
.l3 td { height: 35px; }
.gray-btn {
    width: 104px;
    height: 35px;
    padding: 0;
    flex: none;
    background: #e2e2e2;
    border: 2px solid #888;
    border-radius: 3px;
    color: #666;
    font-size: 14.500px;
}
.lines .inrow {
    gap: 4px;
    padding-left: 6px;
}
.lines .name-cell {
    padding-left: 0;
}
.lines .name-cell .inrow {
    padding-left: 0;
}
.code {
    width: 106px;
    flex: none;
    margin-right: -4px;
    font-size: 19px;
    color: #777;
    white-space: nowrap;
}
.in-name {
    width: 549px;
    height: 24px;
    margin-right: 4px;
}
.in-site {
    width: 330px;
}
.in-qty {
    display: block;
    width: 42px;
    height: 22px;
    padding: 0 3px;
    border-color: #777;
    font-size: 14px;
}
.in-vendor {
    display: block;
    width: 175px;
    margin-left: 1px;
}
.amt {
    display: block;
    width: 96px;
    height: 28px;
    padding: 0 3px;
    background: #fff;
    border: 1px solid #888;
    border-radius: 2px;
    text-align: right;
    font-size: 15px;
    color: #444;
}
.combo {
    display: flex;
    width: 549px;
    height: 23px;
    margin-left: 3px;
    background: #fff;
    border: 1px solid #bbb;
    border-radius: 3px;
}
.combo span {
    flex: 1;
}
.combo i {
    width: 19px;
    border-left: 1px solid #bbb;
    background: linear-gradient(#fff, #ececec);
    font-size: 8px;
    font-style: normal;
    line-height: 21px;
    text-align: center;
    color: #333;
}
.mini-scroll {
    width: 19px;
    height: 364px;
    background: #f1f1f1;
    text-align: center;
}
.mini-scroll i {
    display: block;
    font-size: 8px;
    font-style: normal;
    line-height: 16px;
    color: #999;
}

/* taskbar */
.taskbar {
    display: flex;
    height: 40px;
    flex: none;
    background: linear-gradient(90deg, #1d2328, #2a3034 60%, #23292d);
}
.tb-app {
    position: relative;
    display: flex;
    align-items: center;
    justify-content: center;
    width: 49px;
}
.tb-run::after {
    content: "";
    position: absolute;
    left: 4px;
    right: 4px;
    bottom: 0;
    height: 2px;
    background: #76b9ed;
}
.tb-active {
    background: #4a4f52;
}
.tb-active::after {
    left: 0;
    right: 0;
}
.tb-m {
    position: relative;
    font: bold 24px/1 "Liberation Sans", sans-serif;
    color: #16a1c4;
}
.tb-m::after {
    content: "";
    position: absolute;
    left: 2px;
    right: -3px;
    top: 10px;
    height: 3px;
    background: #b48a3c;
    transform: rotate(-18deg);
}
.tb-x {
    font: bold 10px "Liberation Sans", sans-serif;
    fill: #fff;
}
.tray {
    margin-left: auto;
    display: flex;
    align-items: center;
    gap: 10px;
    padding-right: 15px;
    color: #fff;
}
.tray-ime {
    margin-left: 1px;
    font-size: 15px;
    font-weight: 700;
}
.tray-clock {
    width: 70px;
    margin-left: -6px;
    text-align: center;
    font-size: 11.500px;
    line-height: 17px;
    color: #e8e8e8;
}
.tray-note {
    position: relative;
    width: 26px;
    height: 30px;
    margin-left: 2px;
    padding-top: 5px;
}
.tray-badge {
    position: absolute;
    left: 5px;
    top: 13px;
    width: 21px;
    height: 16px;
    border: 1px solid #aaa;
    border-radius: 8px;
    background: #2a3034;
    font-size: 10.500px;
    line-height: 14px;
    text-align: center;
}
```
